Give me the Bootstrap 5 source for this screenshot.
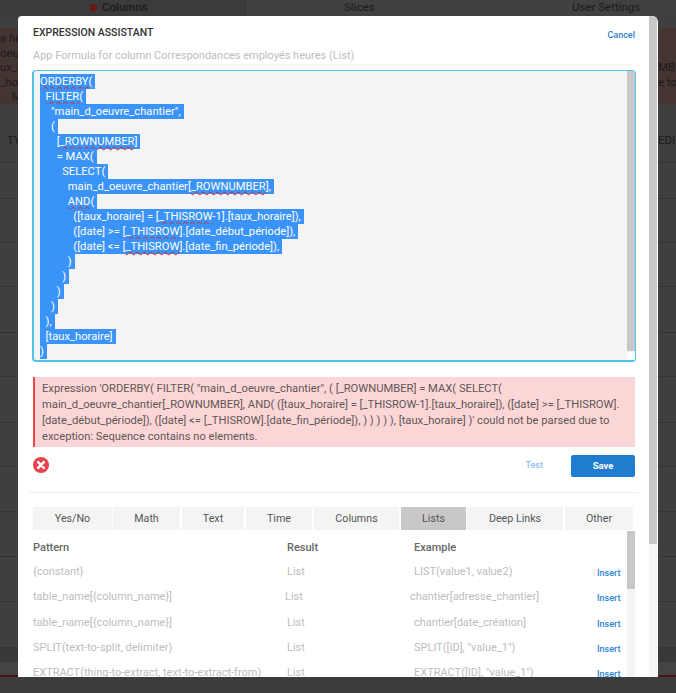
<!DOCTYPE html>
<html lang="en">
<head>
<meta charset="utf-8">
<link href="https://cdn.jsdelivr.net/npm/bootstrap@5.3.0/dist/css/bootstrap.min.css" rel="stylesheet">
<style>
html,body{margin:0;height:693px;overflow:hidden;background-color:#3c3c3c;font-family:Roboto,"Liberation Sans",sans-serif;}
.dim-page{height:693px;position:relative;overflow:hidden;color:#1b1b1b;font-size:12px;background-color:#3f3f3f;}
.dim-tabs{height:16px;background-color:#414141;display:flex;font-size:11.5px;line-height:14px;}
.dim-tab1{width:245px;background-color:#3b3b3b;padding-left:90px;font-weight:500;}
.dim-tab2{width:245px;padding-left:98px;border-left:1px solid #383838;}
.dim-tab3{flex:1;padding-left:82px;}
.dim-dot{display:inline-block;width:7px;height:7px;border-radius:50%;background-color:#6e1414;margin-right:5px;}
.dim-alert{margin-top:12px;height:76px;background-color:#443533;font-size:11.5px;line-height:14.5px;overflow:hidden;display:flex;justify-content:space-between;padding-top:3px;}
.dim-right{padding-top:29px;width:18px;overflow:hidden;white-space:nowrap;}
.dim-left{width:18px;overflow:hidden;white-space:nowrap;}
.dim-head{height:59px;border-bottom:1px solid #333;display:flex;justify-content:space-between;padding:29px 0 0 7px;font-size:11.5px;line-height:14px;}
.dim-head span:last-child{width:18px;overflow:hidden;}
.dim-r36{height:36px;border-bottom:1px solid #333;}
.dim-r44{height:44px;border-bottom:1px solid #333;}
.dim-r46{height:46px;border-bottom:1px solid #333;}
.dim-r45{height:45px;border-bottom:1px solid #333;}
.dim-band{height:14px;background-color:#383838;}
.dim-strip{height:13px;background-color:#444;}
.dim-red{height:2px;background-color:#4a1012;}
.dim-foot{height:16px;background-color:#3c3c3c;}
.modal-win{position:absolute;left:18px;top:16px;width:640px;height:661px;background-color:#fff;border-radius:4px 6px 0 0;overflow:hidden;color:#555;}
.win-bar{position:absolute;right:1px;top:0;bottom:0;width:8px;background-color:#f6f6f6;}
.win-bar i{display:block;height:528px;background-color:#c8c8c8;}
.win-in{height:100%;display:flex;flex-direction:column;}
.ea-head{display:flex;justify-content:space-between;padding:10px 23px 0 15px;height:33px;}
.ea-title{font-size:10.5px;font-weight:500;color:#333;line-height:14px;}
.ea-cancel{font-size:9px;font-weight:500;color:#2a7fd0;line-height:14px;margin-top:2px;}
.ea-sub{font-size:11px;color:#bdbdbd;line-height:14px;padding-left:15px;height:15px;}
.ea-box{position:relative;margin:6px 0 0 14px;width:604px;height:292px;border:solid #4fc3e8;border-width:1px 1px 2px 2px;border-radius:4px;background-color:#f4f4f4;padding:3px 0 0 6px;overflow:hidden;}
.ea-code{font-size:11.2px;line-height:15px;color:#fff;}
.ea-code div{height:15px;white-space:pre;}
.ea-code span{background-color:#3a93f8;display:inline-block;height:15px;padding-right:3px;}
.ea-code u{text-decoration:underline wavy #d22;text-decoration-thickness:1px;text-underline-offset:1px;}
.ea-sb{position:absolute;right:0;top:0;width:8px;bottom:9px;background-color:#c8c8c8;}
.ea-grip{position:absolute;right:0;bottom:0;width:8px;height:8px;background-color:#fff;}
.ea-err{margin:15px 0 0 15px;width:602px;height:70px;background-color:#fcd6d6;border-left:2px solid #ee4444;padding:4px 8px 0 7px;font-size:11.2px;line-height:16px;color:#5f5656;}
.ea-act{display:flex;align-items:center;height:30px;margin:4px 0 0 15px;width:602px;}
.ea-ico{margin-bottom:2px;}
.ea-test{margin-left:auto;font-size:9px;font-weight:500;color:#93c3ee;margin-right:28px;}
.ea-save{width:64px;height:22px;line-height:22px;padding:0;border:0;border-radius:2px;background-color:#1f7ccf;color:#fff;font-size:9.5px;font-weight:700;}
.ea-sep{margin:11px 0 0 12px;width:609px;height:1px;background-color:#ececec;}
.ea-tabs{display:flex;gap:2px;margin:14px 0 0 15px;height:23px;}
.ea-tab{background-color:#f4f4f4;font-size:10.7px;line-height:23px;text-align:center;color:#555;}
.ea-tab.on{background-color:#c8c8c8;}
.ea-tab.snug{margin-left:-1px;}
.tw79{width:79px}.tw67{width:67px}.tw66{width:66px}.tw62{width:62px}.tw85{width:85px}.tw65{width:65px}.tw96{width:96px}.tw68{width:68px}
.ea-list{position:relative;flex:1;overflow:hidden;}
.ea-tbl{padding:11px 0 0 15px;width:610px;}
.ea-r{display:flex;height:25px;font-size:11px;color:#bdbdbd;line-height:14px;white-space:nowrap;}
.ea-r.tall{height:26px;}
.ea-c1{width:254px}.ea-c2{width:127px}.ea-c3{width:183px}
.ea-r.shift .ea-c2{margin-left:-2px}
.ea-r.shift .ea-c3{margin-left:-2px;width:187px}
.ea-h{font-weight:500;color:#666;height:24px;}
.ea-ins{font-size:9px;font-weight:500;color:#2a85da;padding-top:1px;}
.ea-lsb{position:absolute;left:609px;top:1px;width:8px;bottom:0;background-color:#f4f4f4;}
.ea-lsb i{display:block;height:58px;background-color:#c8c8c8;}
</style>
</head>
<body>
<div class="dim-page">
  <div class="dim-tabs">
    <div class="dim-tab1"><span class="dim-dot"></span>Columns</div>
    <div class="dim-tab2">Slices</div>
    <div class="dim-tab3">User Settings</div>
  </div>
  <div class="dim-alert">
    <div class="dim-left">a he<br>oeu<br>ux_h<br>_hor<br>.&nbsp;&nbsp;&nbsp;M</div>
    <div class="dim-right">MBER<br>e to</div>
  </div>
  <div class="dim-head"><span>TY</span><span>EDIT</span></div>
  <div class="dim-r36"></div>
  <div class="dim-r44"></div>
  <div class="dim-r44"></div>
  <div class="dim-r46"></div>
  <div class="dim-r44"></div>
  <div class="dim-r46"></div>
  <div class="dim-r44"></div>
  <div class="dim-r45"></div>
  <div class="dim-r45"></div>
  <div class="dim-r45"></div>
  <div class="dim-r46"></div>
  <div class="dim-band"></div>
  <div class="dim-strip"></div>
  <div class="dim-red"></div>
  <div class="dim-foot"></div>
  <div class="modal-win">
    <div class="win-bar"><i></i></div>
    <div class="win-in">
      <div class="ea-head"><div class="ea-title">EXPRESSION ASSISTANT</div><div class="ea-cancel">Cancel</div></div>
      <div class="ea-sub">App Formula for column Correspondances employés heures (List)</div>
      <div class="ea-box">
        <div class="ea-code">
<div><span><u>ORDERBY</u>(</span></div>
<div><span>  <u>FILTER</u>(</span></div>
<div><span>    "main_d_oeuvre_chantier",</span></div>
<div><span>    (</span></div>
<div><span>      [<u>_ROWNUMBER</u>]</span></div>
<div><span>      = MAX(</span></div>
<div><span>        SELECT(</span></div>
<div><span>          main_d_oeuvre_chantier[<u>_ROWNUMBER</u>],</span></div>
<div><span>          <u>AND</u>(</span></div>
<div><span>            ([taux_horaire] = [<u>_THISROW</u>-1].[taux_horaire]),</span></div>
<div><span>            ([date] &gt;= [<u>_THISROW</u>].[date_début_période]),</span></div>
<div><span>            ([date] &lt;= [<u>_THISROW</u>].[date_fin_période]),</span></div>
<div><span>          )</span></div>
<div><span>        )</span></div>
<div><span>      )</span></div>
<div><span>    )</span></div>
<div><span>  ),</span></div>
<div><span>  [taux_horaire]</span></div>
<div><span>)</span></div>
        </div>
        <div class="ea-sb"></div>
        <div class="ea-grip"></div>
      </div>
      <div class="ea-err">Expression 'ORDERBY( FILTER( "main_d_oeuvre_chantier", ( [_ROWNUMBER] = MAX( SELECT( main_d_oeuvre_chantier[_ROWNUMBER], AND( ([taux_horaire] = [_THISROW-1].[taux_horaire]), ([date] &gt;= [_THISROW].[date_début_période]), ([date] &lt;= [_THISROW].[date_fin_période]), ) ) ) ) ), [taux_horaire] )' could not be parsed due to exception: Sequence contains no elements.</div>
      <div class="ea-act">
        <svg class="ea-ico" width="16" height="16" viewBox="0 0 16 16"><circle cx="8" cy="8" r="8" fill="#e8434a"/><path d="M5.2 5.2l5.6 5.6M10.8 5.2l-5.6 5.6" stroke="#fff" stroke-width="2.6" stroke-linecap="round"/></svg>
        <span class="ea-test">Test</span>
        <button class="btn ea-save">Save</button>
      </div>
      <div class="ea-sep"></div>
      <div class="ea-tabs">
        <div class="ea-tab tw79">Yes/No</div>
        <div class="ea-tab tw67 snug">Math</div>
        <div class="ea-tab tw62">Text</div>
        <div class="ea-tab tw66">Time</div>
        <div class="ea-tab tw85">Columns</div>
        <div class="ea-tab tw65 on">Lists</div>
        <div class="ea-tab tw96 snug">Deep Links</div>
        <div class="ea-tab tw68">Other</div>
      </div>
      <div class="ea-list">
        <div class="ea-tbl">
          <div class="ea-r ea-h"><span class="ea-c1">Pattern</span><span class="ea-c2">Result</span><span class="ea-c3">Example</span></div>
          <div class="ea-r"><span class="ea-c1">{constant}</span><span class="ea-c2">List</span><span class="ea-c3">LIST(value1, value2)</span><span class="ea-ins">Insert</span></div>
          <div class="ea-r tall shift"><span class="ea-c1">table_name[{column_name}]</span><span class="ea-c2">List</span><span class="ea-c3">chantier[adresse_chantier]</span><span class="ea-ins">Insert</span></div>
          <div class="ea-r"><span class="ea-c1">table_name[{column_name}]</span><span class="ea-c2">List</span><span class="ea-c3">chantier[date_création]</span><span class="ea-ins">Insert</span></div>
          <div class="ea-r"><span class="ea-c1">SPLIT(text-to-split, delimiter)</span><span class="ea-c2">List</span><span class="ea-c3">SPLIT([ID], "value_1")</span><span class="ea-ins">Insert</span></div>
          <div class="ea-r"><span class="ea-c1">EXTRACT(thing-to-extract, text-to-extract-from)</span><span class="ea-c2">List</span><span class="ea-c3">EXTRACT([ID], "value_1")</span><span class="ea-ins">Insert</span></div>
        </div>
        <div class="ea-lsb"><i></i></div>
      </div>
    </div>
  </div>
</div>
<script src="https://cdn.jsdelivr.net/npm/bootstrap@5.3.0/dist/js/bootstrap.bundle.min.js"></script>
</body>
</html>
